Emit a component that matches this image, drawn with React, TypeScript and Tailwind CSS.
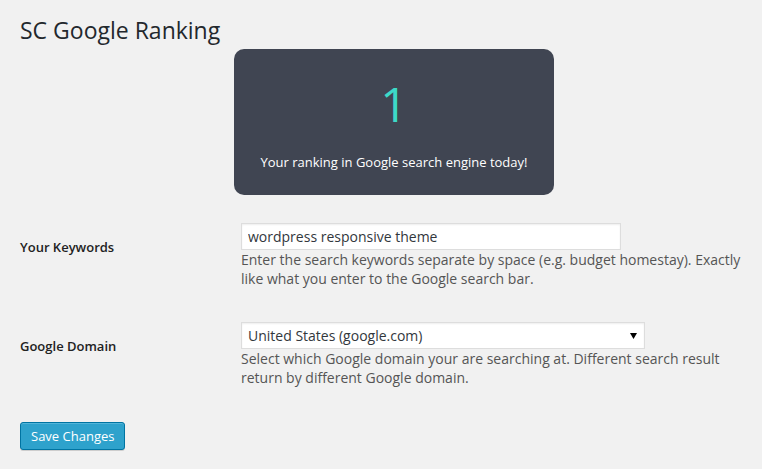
import React from 'react'

const font = { fontFamily: '"Open Sans", "Liberation Sans", sans-serif' }

function RankCard() {
  return (
    <div className="ml-[214px] mt-[4px] flex h-[146px] w-[320px] flex-col items-center rounded-[10px] bg-[#404552] pt-[31px]">
      <div className="text-[48px] leading-[48px] text-[#3dd9c8]">1</div>
      <div className="mt-[24px] text-[13px] leading-[20px] text-white">
        Your ranking in Google search engine today!
      </div>
    </div>
  )
}

function App() {
  return (
    <div className="min-h-[469px] w-full bg-[#f1f1f1] pl-[20px] pt-[16px] text-[#444]" style={font}>
      <h2 className="text-[23px] leading-[29px] font-normal text-[#23282d]">SC Google Ranking</h2>
      <RankCard />

      <div className="mt-[28px] flex">
        <div className="w-[221px] shrink-0 pt-[15px] text-[13px] leading-[18px] font-semibold text-[#222]">
          Your Keywords
        </div>
        <div className="flex flex-col">
          <input
            type="text"
            defaultValue="wordpress responsive theme"
            className="h-[27px] w-[380px] border border-[#ddd] bg-white px-[6px] text-[14px] text-[#32373c] shadow-[inset_0_1px_2px_rgba(0,0,0,0.07)] outline-none"
          />
          <p className="mt-[1px] w-[512px] text-[14px] leading-[18.5px] text-[#555]">
            Enter the search keywords separate by space (e.g. budget homestay). Exactly like what you enter to the Google search bar.
          </p>
        </div>
      </div>

      <div className="mt-[34px] flex">
        <div className="w-[221px] shrink-0 pt-[15px] text-[13px] leading-[18px] font-semibold text-[#222]">
          Google Domain
        </div>
        <div className="flex flex-col">
          <div className="relative w-[404px]">
            <select
              defaultValue="us"
              className="h-[27px] w-full appearance-none border border-[#ddd] bg-white px-[6px] text-[14px] text-[#32373c] shadow-[inset_0_1px_2px_rgba(0,0,0,0.07)] outline-none"
            >
              <option value="us">United States (google.com)</option>
            </select>
            <svg className="pointer-events-none absolute right-[8px] top-[11px]" width="7" height="6" viewBox="0 0 7 6">
              <path d="M0 0h7L3.5 6z" fill="#000" />
            </svg>
          </div>
          <p className="mt-[1px] w-[512px] text-[14px] leading-[18.5px] text-[#555]">
            Select which Google domain your are searching at. Different search result return by different Google domain.
          </p>
        </div>
      </div>

      <button className="mt-[35px] h-[28px] rounded-[3px] border border-[#0074a2] bg-[#2ea2cc] px-[10px] text-[13px] leading-[26px] text-white shadow-[inset_0_1px_0_rgba(120,200,230,0.5),0_1px_0_rgba(0,0,0,0.15)]">
        Save Changes
      </button>
    </div>
  )
}

export default App
